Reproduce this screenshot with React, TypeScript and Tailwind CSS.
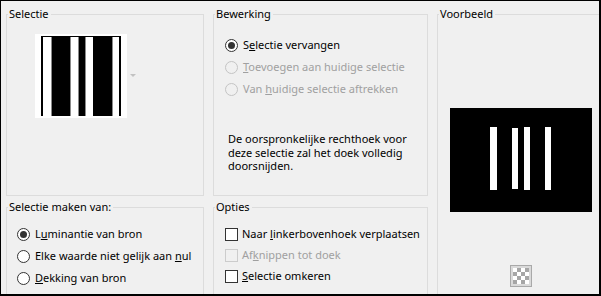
import type { ReactNode } from 'react'

const font = { fontFamily: '"Segoe UI", "Noto Sans", sans-serif' }

function Radio({ checked, disabled, children }: { checked?: boolean; disabled?: boolean; children: ReactNode }) {
  return (
    <div className={`flex items-center h-[22px] whitespace-nowrap ${disabled ? 'text-[#a0a0a0]' : 'text-black'}`}>
      <span
        className={`w-[13px] h-[13px] shrink-0 rounded-full border flex items-center justify-center ${
          disabled ? 'border-[#c4c4c4] bg-[#f0f0f0]' : 'border-[#333] bg-white'
        }`}
      >
        {checked && <span className="w-[7px] h-[7px] rounded-full bg-[#333]" />}
      </span>
      <span className="ml-[5px]">{children}</span>
    </div>
  )
}

function Check({ disabled, children }: { disabled?: boolean; children: ReactNode }) {
  return (
    <div className={`flex items-center h-[21px] whitespace-nowrap ${disabled ? 'text-[#a0a0a0]' : 'text-black'}`}>
      <span
        className={`w-[13px] h-[13px] shrink-0 border ${disabled ? 'border-[#cccccc] bg-[#f0f0f0]' : 'border-[#333] bg-white'}`}
      />
      <span className="ml-[4px]">{children}</span>
    </div>
  )
}

function Group({ title, className, children }: { title: string; className?: string; children?: ReactNode }) {
  return (
    <fieldset className={`border border-[#dcdcdc] min-w-0 ${className ?? ''}`}>
      <legend className="ml-[1px] pl-[1px] pr-[2px] leading-[16px] text-black whitespace-nowrap">{title}</legend>
      {children}
    </fieldset>
  )
}

function Thumb() {
  return (
    <svg width="92" height="84" viewBox="0 0 92 84">
      <rect width="92" height="84" fill="#fff" />
      <rect x="6" y="2" width="80" height="1" fill="#000" />
      <rect x="6" y="2" width="2" height="80" fill="#000" />
      <rect x="16" y="3" width="1" height="79" fill="#8a8a8a" />
      <rect x="17" y="2" width="18" height="80" fill="#000" />
      <rect x="35" y="3" width="1" height="79" fill="#8a8a8a" />
      <rect x="43" y="3" width="1" height="79" fill="#8a8a8a" />
      <rect x="44" y="2" width="6" height="80" fill="#000" />
      <rect x="50" y="3" width="1" height="79" fill="#8a8a8a" />
      <rect x="58" y="2" width="19" height="80" fill="#000" />
      <rect x="77" y="3" width="1" height="79" fill="#8a8a8a" />
      <rect x="84" y="2" width="2" height="80" fill="#000" />
    </svg>
  )
}

function Preview() {
  return (
    <svg width="142" height="104" viewBox="0 0 142 104">
      <rect width="142" height="104" fill="#000" />
      <rect x="40" y="19" width="7" height="63" fill="#fff" />
      <rect x="62" y="20" width="6" height="61" fill="#fff" />
      <rect x="74" y="19" width="6" height="63" fill="#fff" />
      <rect x="95" y="19" width="6" height="63" fill="#fff" />
    </svg>
  )
}

function Checker() {
  const cells = []
  for (let r = 0; r < 4; r++)
    for (let c = 0; c < 4; c++)
      if ((r + c) % 2 === 1) cells.push(<rect key={`${r}-${c}`} x={3 + c * 4} y={3 + r * 4} width="4" height="4" fill="#a6a6a6" />)
  return (
    <svg width="22" height="22" viewBox="0 0 22 22">
      <rect x="0.5" y="0.5" width="21" height="21" fill="#dadada" stroke="#a9a9a9" />
      <rect x="3" y="3" width="16" height="16" fill="#fff" />
      {cells}
    </svg>
  )
}

export default function App() {
  return (
    <div
      className="w-[601px] h-[296px] overflow-hidden bg-[#f0f0f0] border-l border-t border-r-2 border-b-2 border-black text-[11px]"
      style={font}
    >
      <div className="grid grid-cols-[198px_215px_168px] grid-rows-[190px_110px] gap-x-[9px] gap-y-[3px] pl-[5px] pt-[5px]">
        <Group title="Selectie">
          <div className="flex items-start pl-[28px] pt-[12px]">
            <Thumb />
            <svg width="6" height="4" viewBox="0 0 6 4" className="ml-[3px] mt-[40px]">
              <path d="M0 0h6L3 3z" fill="#c2c2c2" />
            </svg>
          </div>
        </Group>

        <Group title="Bewerking">
          <div className="pl-[11px] pt-[12px]">
            <Radio checked>
              S<u>e</u>lectie vervangen
            </Radio>
            <Radio disabled>
              <u>T</u>oevoegen aan huidige selectie
            </Radio>
            <Radio disabled>
              Van <u>h</u>uidige selectie aftrekken
            </Radio>
            <p className="mt-[32px] ml-[3px] leading-[13.5px] text-black whitespace-nowrap">
              De oorspronkelijke rechthoek voor
              <br />
              deze selectie zal het doek volledig
              <br />
              doorsnijden.
            </p>
          </div>
        </Group>

        <Group title="Voorbeeld" className="row-span-2">
          <div className="flex flex-col items-center pt-[86px]">
            <Preview />
            <div className="mt-[53px]">
              <Checker />
            </div>
          </div>
        </Group>

        <Group title="Selectie maken van:">
          <div className="pl-[10px] pt-[8px]">
            <Radio checked>
              L<u>u</u>minantie van bron
            </Radio>
            <Radio>
              Elke waarde niet gelijk aan <u>n</u>ul
            </Radio>
            <Radio>
              <u>D</u>ekking van bron
            </Radio>
          </div>
        </Group>

        <Group title="Opties">
          <div className="pl-[11px] pt-[9px]">
            <Check>
              Naar <u>l</u>inkerbovenhoek verplaatsen
            </Check>
            <Check disabled>
              Af<u>k</u>nippen tot doek
            </Check>
            <Check>
              <u>S</u>electie omkeren
            </Check>
          </div>
        </Group>
      </div>
    </div>
  )
}
